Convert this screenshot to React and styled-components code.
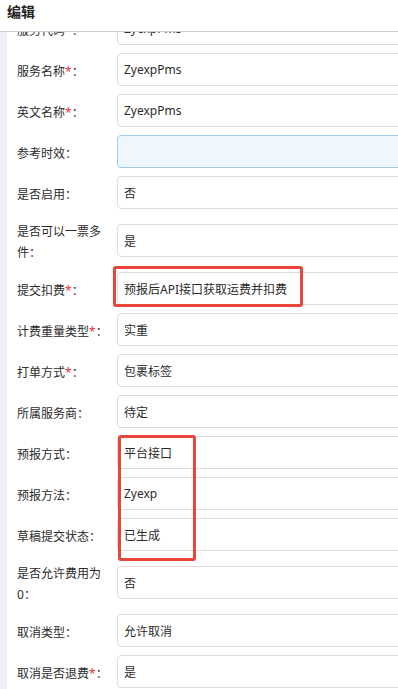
import React from "react";
import styled, { createGlobalStyle } from "styled-components";

const GlobalStyle = createGlobalStyle`
  html, body {
    margin: 0;
    padding: 0;
    background: #fff;
  }
  body {
    font-family: "Noto Sans", "Noto Sans CJK SC", sans-serif;
    color: #333;
  }
`;

const Page = styled.div`
  width: 398px;
  height: 689px;
  display: flex;
  flex-direction: column;
  overflow: hidden;
  background: #fff;
`;

const Header = styled.div`
  height: 32px;
  box-sizing: border-box;
  padding: 3px 7px 0;
  border-bottom: 1px solid #cfcfcf;
  font-size: 14px;
  line-height: 18px;
  font-weight: 700;
  color: #222;
  flex-shrink: 0;
`;

const Body = styled.div`
  flex: 1;
  display: flex;
  overflow: hidden;
`;

const SideStrip = styled.div`
  width: 7px;
  flex-shrink: 0;
  background: #eef0f6;
`;

const Panel = styled.div`
  flex: 1;
  overflow: hidden;
  padding-left: 10px;
`;

const Form = styled.div`
  margin-top: -20px;
  display: flex;
  flex-direction: column;
  gap: 8px;
`;

const Row = styled.div`
  display: flex;
  align-items: center;
  min-height: 33px;
`;

const Label = styled.div`
  width: 100px;
  flex-shrink: 0;
  box-sizing: border-box;
  padding: 4px 6px 1px 0;
  font-size: 12px;
  line-height: 21px;
  color: #2b2b2b;
`;

const Star = styled.span`
  color: #f23030;
  font-size: 12px;
`;

const Field = styled.div`
  position: relative;
  flex: 1;
  margin-right: -30px;
  height: 33px;
  box-sizing: border-box;
  display: flex;
  align-items: center;
  padding: 0 6px;
  border: 1px solid ${(p) => (p.$active ? "#a6cbee" : "#dcdcdc")};
  border-radius: 4px;
  background: ${(p) => (p.$active ? "#eef6fe" : "#fff")};
  font-size: 12px;
  color: #2b2b2b;
  white-space: nowrap;
`;

// red annotation frames drawn over the fields
const Highlight = styled.div`
  position: absolute;
  left: ${(p) => p.$x}px;
  top: ${(p) => p.$y}px;
  width: ${(p) => p.$w}px;
  height: ${(p) => p.$h}px;
  box-sizing: border-box;
  border: 3px solid #e9453b;
  border-radius: 3px;
  pointer-events: none;
  z-index: 2;
`;

const marks = {
  wide: { x: -5, y: -7, w: 190, h: 41 },
  tall: { x: 0, y: -2, w: 78, h: 126 },
};

const rows = [
  { label: "服务代码", req: true, value: "ZyexpPms" },
  { label: "服务名称", req: true, value: "ZyexpPms" },
  { label: "英文名称", req: true, value: "ZyexpPms" },
  { label: "参考时效", value: "", active: true },
  { label: "是否启用", value: "否" },
  { label: "是否可以一票多件", value: "是" },
  { label: "提交扣费", req: true, value: "预报后API接口获取运费并扣费", mark: "wide" },
  { label: "计费重量类型", req: true, value: "实重" },
  { label: "打单方式", req: true, value: "包裹标签" },
  { label: "所属服务商", value: "待定" },
  { label: "预报方式", value: "平台接口", mark: "tall" },
  { label: "预报方法", value: "Zyexp" },
  { label: "草稿提交状态", value: "已生成" },
  { label: "是否允许费用为0", value: "否" },
  { label: "取消类型", value: "允许取消" },
  { label: "取消是否退费", req: true, value: "是" },
];

const App = () => {
  return (
    <Page>
      <GlobalStyle />
      <Header>编辑</Header>
      <Body>
        <SideStrip />
        <Panel>
          <Form>
            {rows.map((r) => {
              const m = r.mark && marks[r.mark];
              return (
                <Row key={r.label}>
                  <Label>
                    {r.label}
                    {r.req && <Star>*</Star>}：
                  </Label>
                  <Field $active={r.active}>
                    {r.value}
                    {m && <Highlight $x={m.x} $y={m.y} $w={m.w} $h={m.h} />}
                  </Field>
                </Row>
              );
            })}
          </Form>
        </Panel>
      </Body>
    </Page>
  );
};

export default App;
